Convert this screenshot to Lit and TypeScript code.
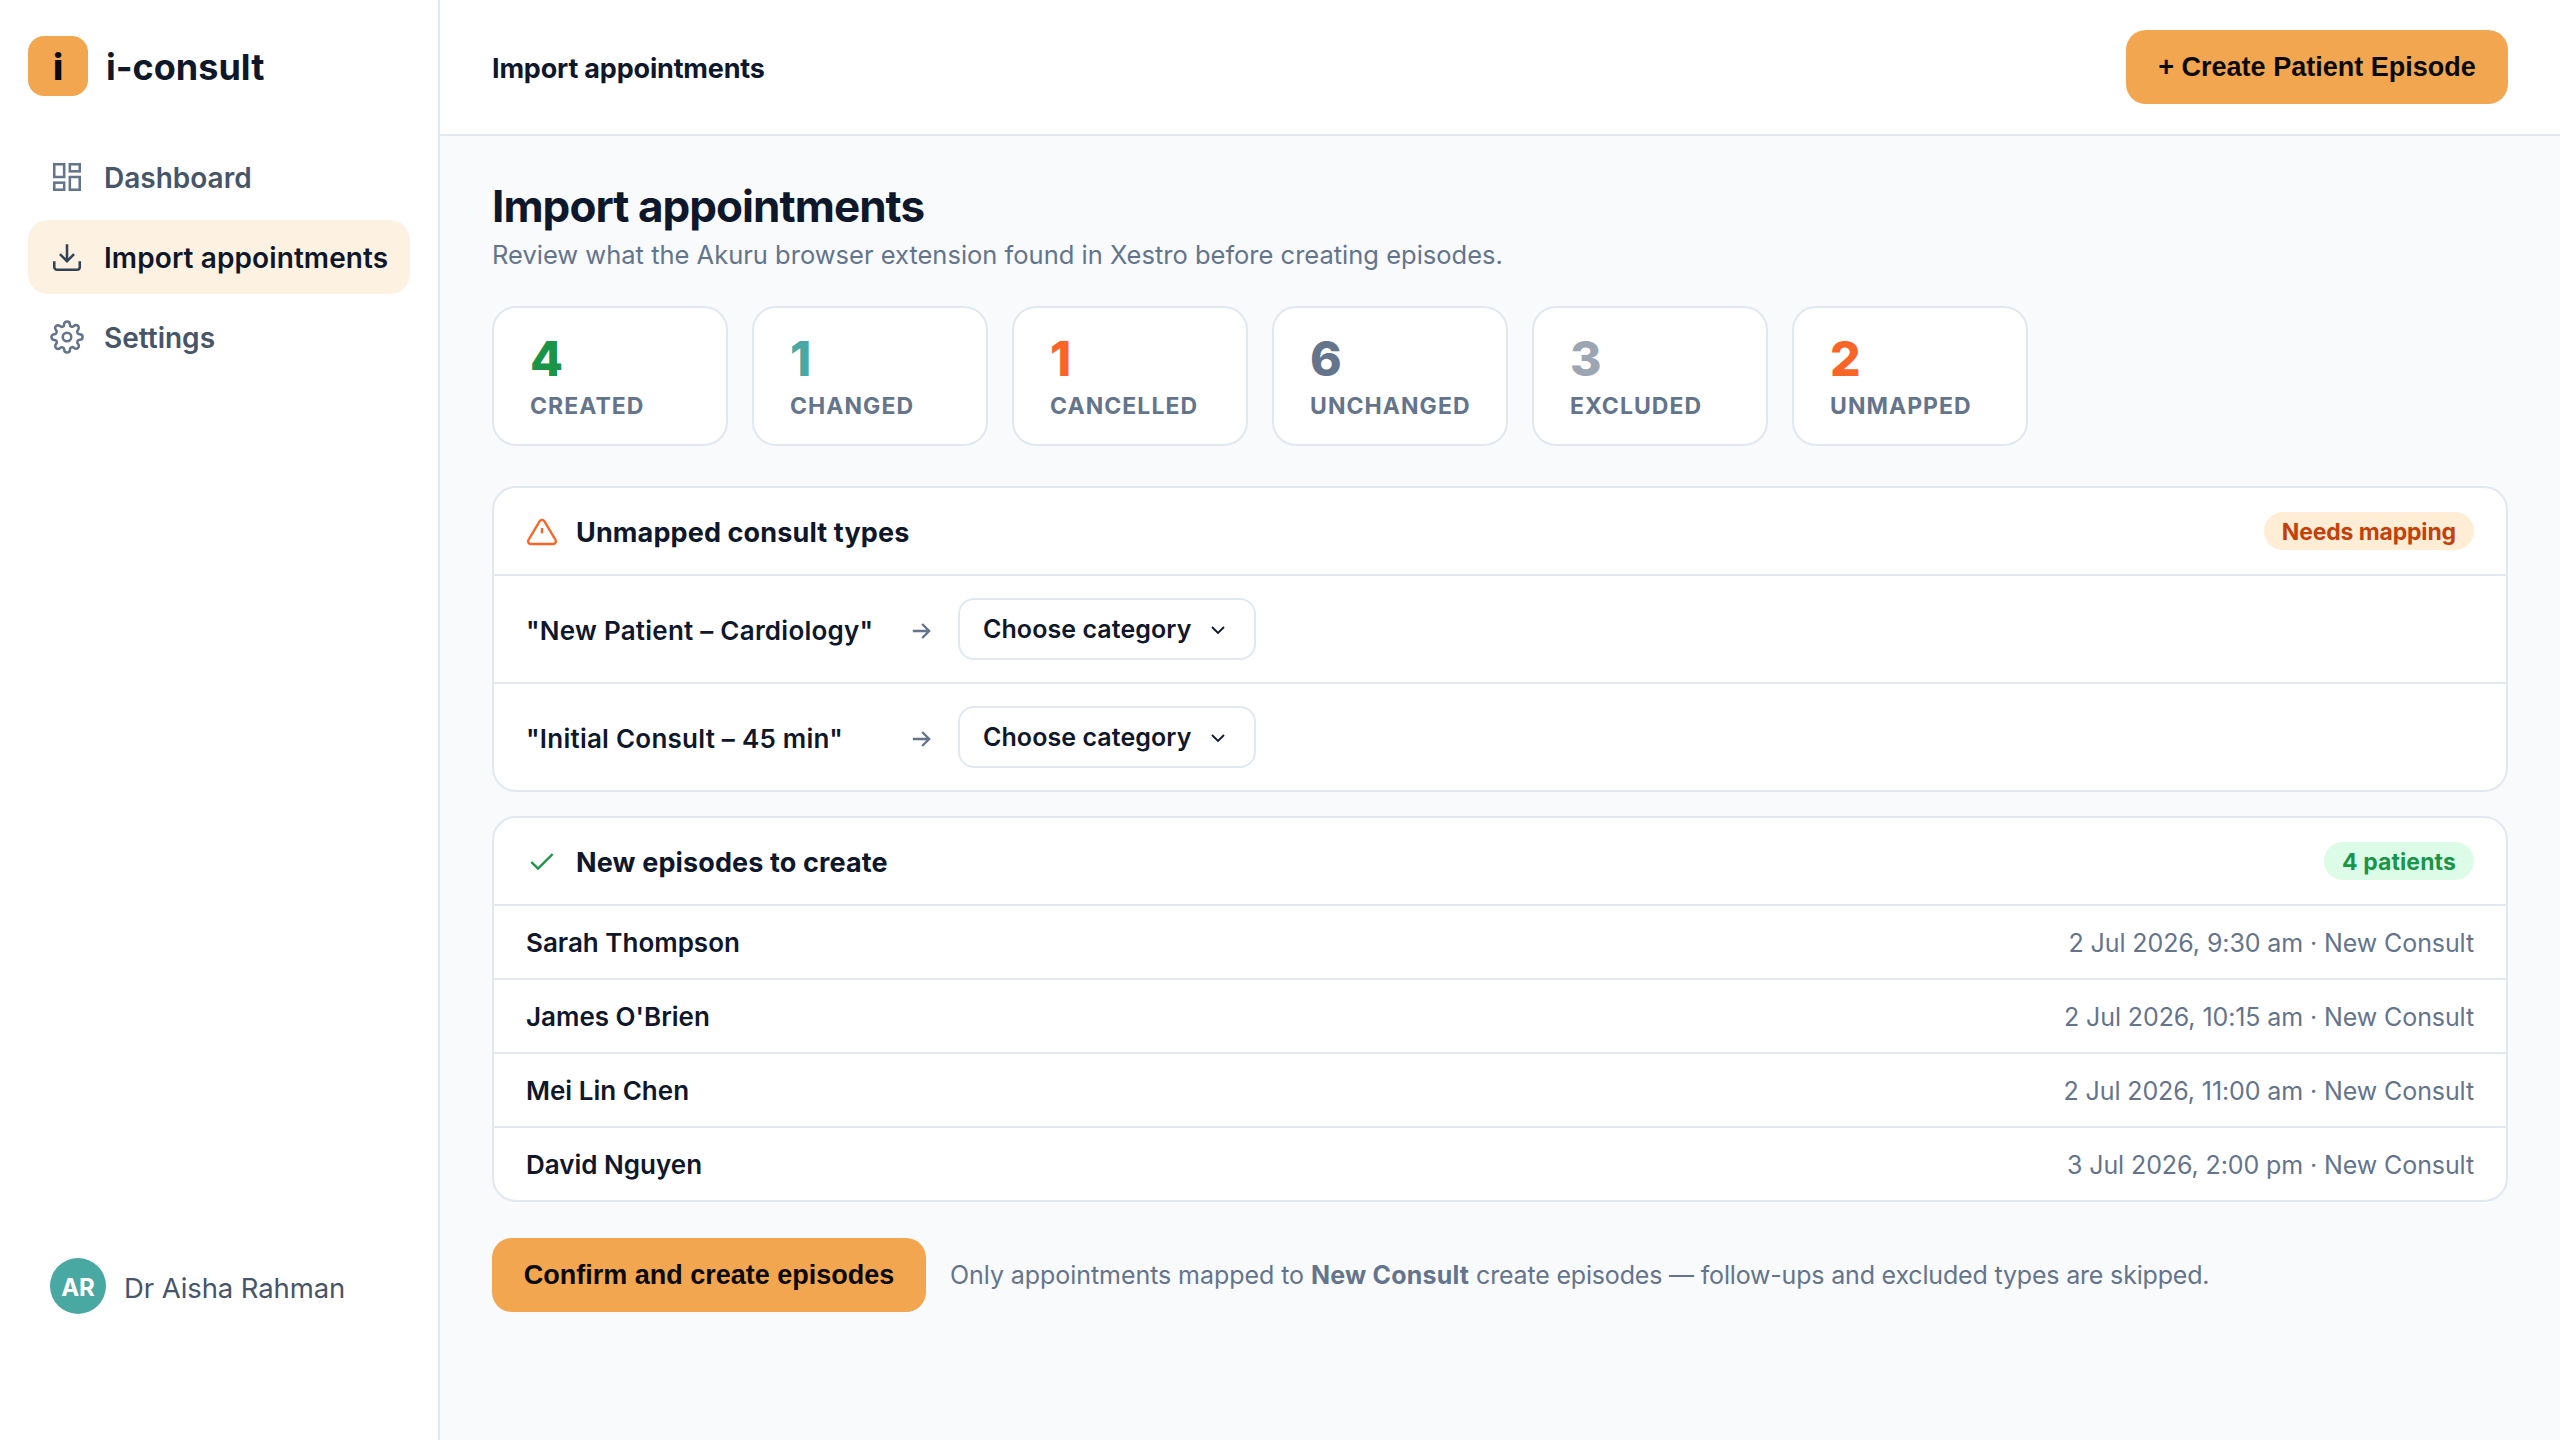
import { LitElement, html, css, svg } from "lit";
import { customElement } from "lit/decorators.js";
import { classMap } from "lit/directives/class-map.js";

const icons = {
  dashboard: svg`<rect x="3" y="3" width="7" height="9"/><rect x="14" y="3" width="7" height="5"/><rect x="14" y="12" width="7" height="9"/><rect x="3" y="16" width="7" height="5"/>`,
  download: svg`<path d="M21 15v4a2 2 0 0 1-2 2H5a2 2 0 0 1-2-2v-4"/><path d="M7 10l5 5 5-5"/><path d="M12 15V3"/>`,
  settings: svg`<circle cx="12" cy="12" r="3"/><path d="M19.4 15a1.65 1.65 0 0 0 .33 1.82l.06.06a2 2 0 0 1 0 2.83 2 2 0 0 1-2.83 0l-.06-.06a1.65 1.65 0 0 0-1.82-.33 1.65 1.65 0 0 0-1 1.51V21a2 2 0 0 1-2 2 2 2 0 0 1-2-2v-.09A1.65 1.65 0 0 0 9 19.4a1.65 1.65 0 0 0-1.82.33l-.06.06a2 2 0 0 1-2.83 0 2 2 0 0 1 0-2.83l.06-.06a1.65 1.65 0 0 0 .33-1.82 1.65 1.65 0 0 0-1.51-1H3a2 2 0 0 1-2-2 2 2 0 0 1 2-2h.09A1.65 1.65 0 0 0 4.6 9a1.65 1.65 0 0 0-.33-1.82l-.06-.06a2 2 0 0 1 0-2.83 2 2 0 0 1 2.83 0l.06.06a1.65 1.65 0 0 0 1.82.33H9a1.65 1.65 0 0 0 1-1.51V3a2 2 0 0 1 2-2 2 2 0 0 1 2 2v.09a1.65 1.65 0 0 0 1 1.51 1.65 1.65 0 0 0 1.82-.33l.06-.06a2 2 0 0 1 2.83 0 2 2 0 0 1 0 2.83l-.06.06a1.65 1.65 0 0 0-.33 1.82V9a1.65 1.65 0 0 0 1.51 1H21a2 2 0 0 1 2 2 2 2 0 0 1-2 2h-.09a1.65 1.65 0 0 0-1.51 1z"/>`,
  alert: svg`<path d="M10.29 3.86L1.82 18a2 2 0 0 0 1.71 3h16.94a2 2 0 0 0 1.71-3L13.71 3.86a2 2 0 0 0-3.42 0z"/><path d="M12 9v4"/>`,
  check: svg`<path d="M20 6L9 17l-5-5"/>`,
  arrow: svg`<path d="M5 12h14M13 6l6 6-6 6"/>`,
  chevron: svg`<path d="M6 9l6 6 6-6"/>`,
};

const icon = (name: keyof typeof icons, cls: string) => html`
  <svg class="icon ${cls}" viewBox="0 0 24 24" aria-hidden="true">${icons[name]}</svg>
`;

const nav: { label: string; icon: keyof typeof icons; active?: boolean }[] = [
  { label: "Dashboard", icon: "dashboard" },
  { label: "Import appointments", icon: "download", active: true },
  { label: "Settings", icon: "settings" },
];

const stats = [
  { value: 4, label: "CREATED", tone: "green" },
  { value: 1, label: "CHANGED", tone: "teal" },
  { value: 1, label: "CANCELLED", tone: "orange" },
  { value: 6, label: "UNCHANGED", tone: "slate" },
  { value: 3, label: "EXCLUDED", tone: "grey" },
  { value: 2, label: "UNMAPPED", tone: "orange" },
];

const unmapped = ['"New Patient – Cardiology"', '"Initial Consult – 45 min"'];

const episodes = [
  { name: "Sarah Thompson", detail: "2 Jul 2026, 9:30 am · New Consult" },
  { name: "James O'Brien", detail: "2 Jul 2026, 10:15 am · New Consult" },
  { name: "Mei Lin Chen", detail: "2 Jul 2026, 11:00 am · New Consult" },
  { name: "David Nguyen", detail: "3 Jul 2026, 2:00 pm · New Consult" },
];

@customElement("app-root")
export class AppRoot extends LitElement {
  static styles = css`
    :host {
      display: flex;
      height: 100vh;
      overflow: hidden;
      background: #f8fafc;
      color: #0f172a;
      font-family: Inter, "Liberation Sans", sans-serif;
    }
    * {
      box-sizing: border-box;
    }
    h1, h2, p {
      margin: 0;
    }
    .icon {
      flex: none;
      display: block;
      fill: none;
      stroke: currentColor;
      stroke-width: 1.8;
    }

    .sidebar {
      flex: none;
      display: flex;
      flex-direction: column;
      width: 440px;
      padding: 36px 28px 126px;
      background: #fff;
      border-right: 2px solid #e2e8f0;
    }
    .brand {
      display: flex;
      align-items: center;
      gap: 18px;
      height: 60px;
      margin-bottom: 44px;
    }
    .mark {
      display: flex;
      justify-content: center;
      align-items: center;
      width: 60px;
      height: 60px;
      padding-top: 2px;
      border-radius: 16px;
      background: #f2a64f;
      color: #0a0a0a;
      font-size: 36px;
      line-height: 44px;
      font-weight: 800;
    }
    .brand-name {
      padding-top: 2px;
      font-size: 36px;
      line-height: 44px;
      font-weight: 700;
    }
    .nav {
      display: flex;
      flex-direction: column;
      gap: 6px;
    }
    .nav-item {
      display: flex;
      align-items: center;
      gap: 20px;
      height: 74px;
      padding: 0 22px;
      border-radius: 20px;
      color: #475569;
      font-size: 28px;
      line-height: 34px;
      font-weight: 600;
      white-space: nowrap;
    }
    .nav-item .icon {
      width: 34px;
      height: 34px;
      color: #64748b;
    }
    .nav-item span {
      padding-top: 2px;
    }
    .nav-item.active {
      background: #fdf2e1;
      color: #0f172a;
      letter-spacing: 0.1px;
    }
    .nav-item.active .icon {
      color: #334155;
    }
    .user {
      display: flex;
      align-items: center;
      gap: 18px;
      margin-top: auto;
      padding-left: 22px;
      color: #475569;
      font-size: 27.5px;
      line-height: 34px;
      letter-spacing: -0.1px;
    }
    .user-name {
      padding-top: 4px;
    }
    .avatar {
      display: flex;
      justify-content: center;
      align-items: center;
      width: 56px;
      height: 56px;
      padding-top: 3px;
      border-radius: 50%;
      background: #4aa8a2;
      color: #fff;
      font-size: 24px;
      line-height: 29px;
      font-weight: 700;
    }

    .main {
      flex: 1;
      display: flex;
      flex-direction: column;
      min-width: 0;
    }
    .topbar {
      flex: none;
      display: flex;
      align-items: center;
      justify-content: space-between;
      height: 136px;
      padding: 0 52px;
      background: #fff;
      border-bottom: 2px solid #e2e8f0;
    }
    .crumb {
      padding-top: 3px;
      font-size: 27px;
      line-height: 33px;
      font-weight: 700;
      letter-spacing: -0.18px;
    }
    .button {
      display: flex;
      align-items: center;
      justify-content: center;
      width: 382px;
      height: 74px;
      padding: 0;
      border: 0;
      border-radius: 20px;
      background: #f2a64f;
      color: #0a0a0a;
      font: 700 27px / 30px "Liberation Sans", Arial, sans-serif;
      white-space: nowrap;
    }
    .content {
      padding: 43px 52px 0;
    }
    h1 {
      font-size: 44px;
      line-height: 54px;
      font-weight: 700;
      letter-spacing: -0.95px;
    }
    .lead {
      margin-top: 6px;
      color: #64748b;
      font-size: 25.5px;
      line-height: 31px;
    }

    .stats {
      display: flex;
      gap: 24px;
      margin-top: 36px;
    }
    .stat {
      width: 236px;
      height: 140px;
      padding: 21px 36px 0;
      background: #fff;
      border: 2px solid #e2e8f0;
      border-radius: 24px;
    }
    .stat-value {
      font-size: 48px;
      line-height: 59px;
      font-weight: 800;
    }
    .stat-label {
      margin-top: 4px;
      color: #64748b;
      font-size: 23px;
      line-height: 28px;
      font-weight: 700;
      letter-spacing: 1.05px;
    }
    .green { color: #1a9447; }
    .teal { color: #4aa8a2; }
    .orange { color: #f96527; }
    .slate { color: #64748b; }
    .grey { color: #9ca5b2; }

    .panel {
      margin-top: 24px;
      background: #fff;
      border: 2px solid #e2e8f0;
      border-radius: 24px;
    }
    .stats + .panel {
      margin-top: 40px;
    }
    .panel-head {
      display: flex;
      align-items: center;
      height: 86px;
      padding: 0 32px;
    }
    .panel-head .icon {
      width: 32px;
      height: 32px;
      margin: 2px 18px 0 0;
    }
    h2 {
      padding-top: 3px;
      font-size: 27px;
      line-height: 33px;
      font-weight: 700;
      letter-spacing: 0.13px;
    }
    .badge {
      margin-left: auto;
      padding: 6px 18px 4px;
      border-radius: 19px;
      font-size: 23px;
      line-height: 28px;
      font-weight: 700;
    }
    .badge.warn {
      background: #ffedd5;
      color: #c2410c;
      letter-spacing: -0.15px;
    }
    .badge.ok {
      background: #dcfce7;
      color: #1a9447;
      letter-spacing: 0.12px;
    }
    .row {
      display: flex;
      align-items: center;
      padding: 0 32px;
      border-top: 2px solid #e2e8f0;
    }
    .map-row {
      height: 108px;
    }
    .source {
      width: 360px;
      padding-top: 3px;
      font-size: 26px;
      line-height: 31px;
      font-weight: 600;
      letter-spacing: 0.24px;
      white-space: nowrap;
    }
    .map-row > .icon {
      width: 28px;
      height: 28px;
      margin: 3px 23px 0 21px;
      color: #64748b;
      stroke-width: 2;
    }
    .select {
      display: flex;
      align-items: center;
      justify-content: space-between;
      width: 298px;
      height: 62px;
      padding: 0 24px 0 23px;
      border: 2px solid #e2e8f0;
      border-radius: 16px;
      background: #fff;
      color: #0f172a;
      font: 600 25px / 30px Inter, "Liberation Sans", sans-serif;
      letter-spacing: 0.07px;
      white-space: nowrap;
    }
    .select .icon {
      width: 24px;
      height: 24px;
      margin-top: 2px;
    }
    .episode {
      justify-content: space-between;
      height: 74px;
    }
    .name {
      padding-top: 1px;
      font-size: 26px;
      line-height: 31px;
      font-weight: 600;
    }
    .detail {
      padding-top: 2px;
      color: #64748b;
      font-size: 25px;
      line-height: 30px;
      letter-spacing: -0.1px;
    }
    .actions {
      display: flex;
      align-items: center;
      gap: 24px;
      margin-top: 36px;
    }
    .actions .button {
      width: 434px;
    }
    .note {
      color: #64748b;
      font-size: 25px;
      line-height: 30px;
      letter-spacing: -0.18px;
    }
    .note b {
      font-weight: 700;
      letter-spacing: 0.2px;
    }
    .note .lead-in {
      letter-spacing: -0.06px;
    }
  `;

  render() {
    return html`
      <aside class="sidebar">
        <div class="brand">
          <div class="mark">i</div>
          <div class="brand-name">i-consult</div>
        </div>
        <nav class="nav">
          ${nav.map(
            (n) => html`<div class=${classMap({ "nav-item": true, active: !!n.active })}>
              ${icon(n.icon, "")}<span>${n.label}</span>
            </div>`
          )}
        </nav>
        <div class="user">
          <div class="avatar">AR</div>
          <div class="user-name">Dr Aisha Rahman</div>
        </div>
      </aside>
      <main class="main">
        <header class="topbar">
          <div class="crumb">Import appointments</div>
          <button class="button">+ Create Patient Episode</button>
        </header>
        <div class="content">
          <h1>Import appointments</h1>
          <p class="lead">Review what the Akuru browser extension found in Xestro before creating episodes.</p>
          <div class="stats">
            ${stats.map(
              (s) => html`<div class="stat">
                <div class="stat-value ${s.tone}">${s.value}</div>
                <div class="stat-label">${s.label}</div>
              </div>`
            )}
          </div>
          <section class="panel">
            <div class="panel-head">
              ${icon("alert", "orange")}
              <h2>Unmapped consult types</h2>
              <span class="badge warn">Needs mapping</span>
            </div>
            ${unmapped.map(
              (u) => html`<div class="row map-row">
                <div class="source">${u}</div>
                ${icon("arrow", "")}
                <button class="select"><span>Choose category</span>${icon("chevron", "")}</button>
              </div>`
            )}
          </section>
          <section class="panel">
            <div class="panel-head">
              ${icon("check", "green")}
              <h2>New episodes to create</h2>
              <span class="badge ok">4 patients</span>
            </div>
            ${episodes.map(
              (e) => html`<div class="row episode">
                <span class="name">${e.name}</span>
                <span class="detail">${e.detail}</span>
              </div>`
            )}
          </section>
          <div class="actions">
            <button class="button">Confirm and create episodes</button>
            <p class="note"><span class="lead-in">Only appointments mapped to </span><b>New Consult</b> create episodes — follow-ups and excluded types are skipped.</p>
          </div>
        </div>
      </main>
    `;
  }
}
